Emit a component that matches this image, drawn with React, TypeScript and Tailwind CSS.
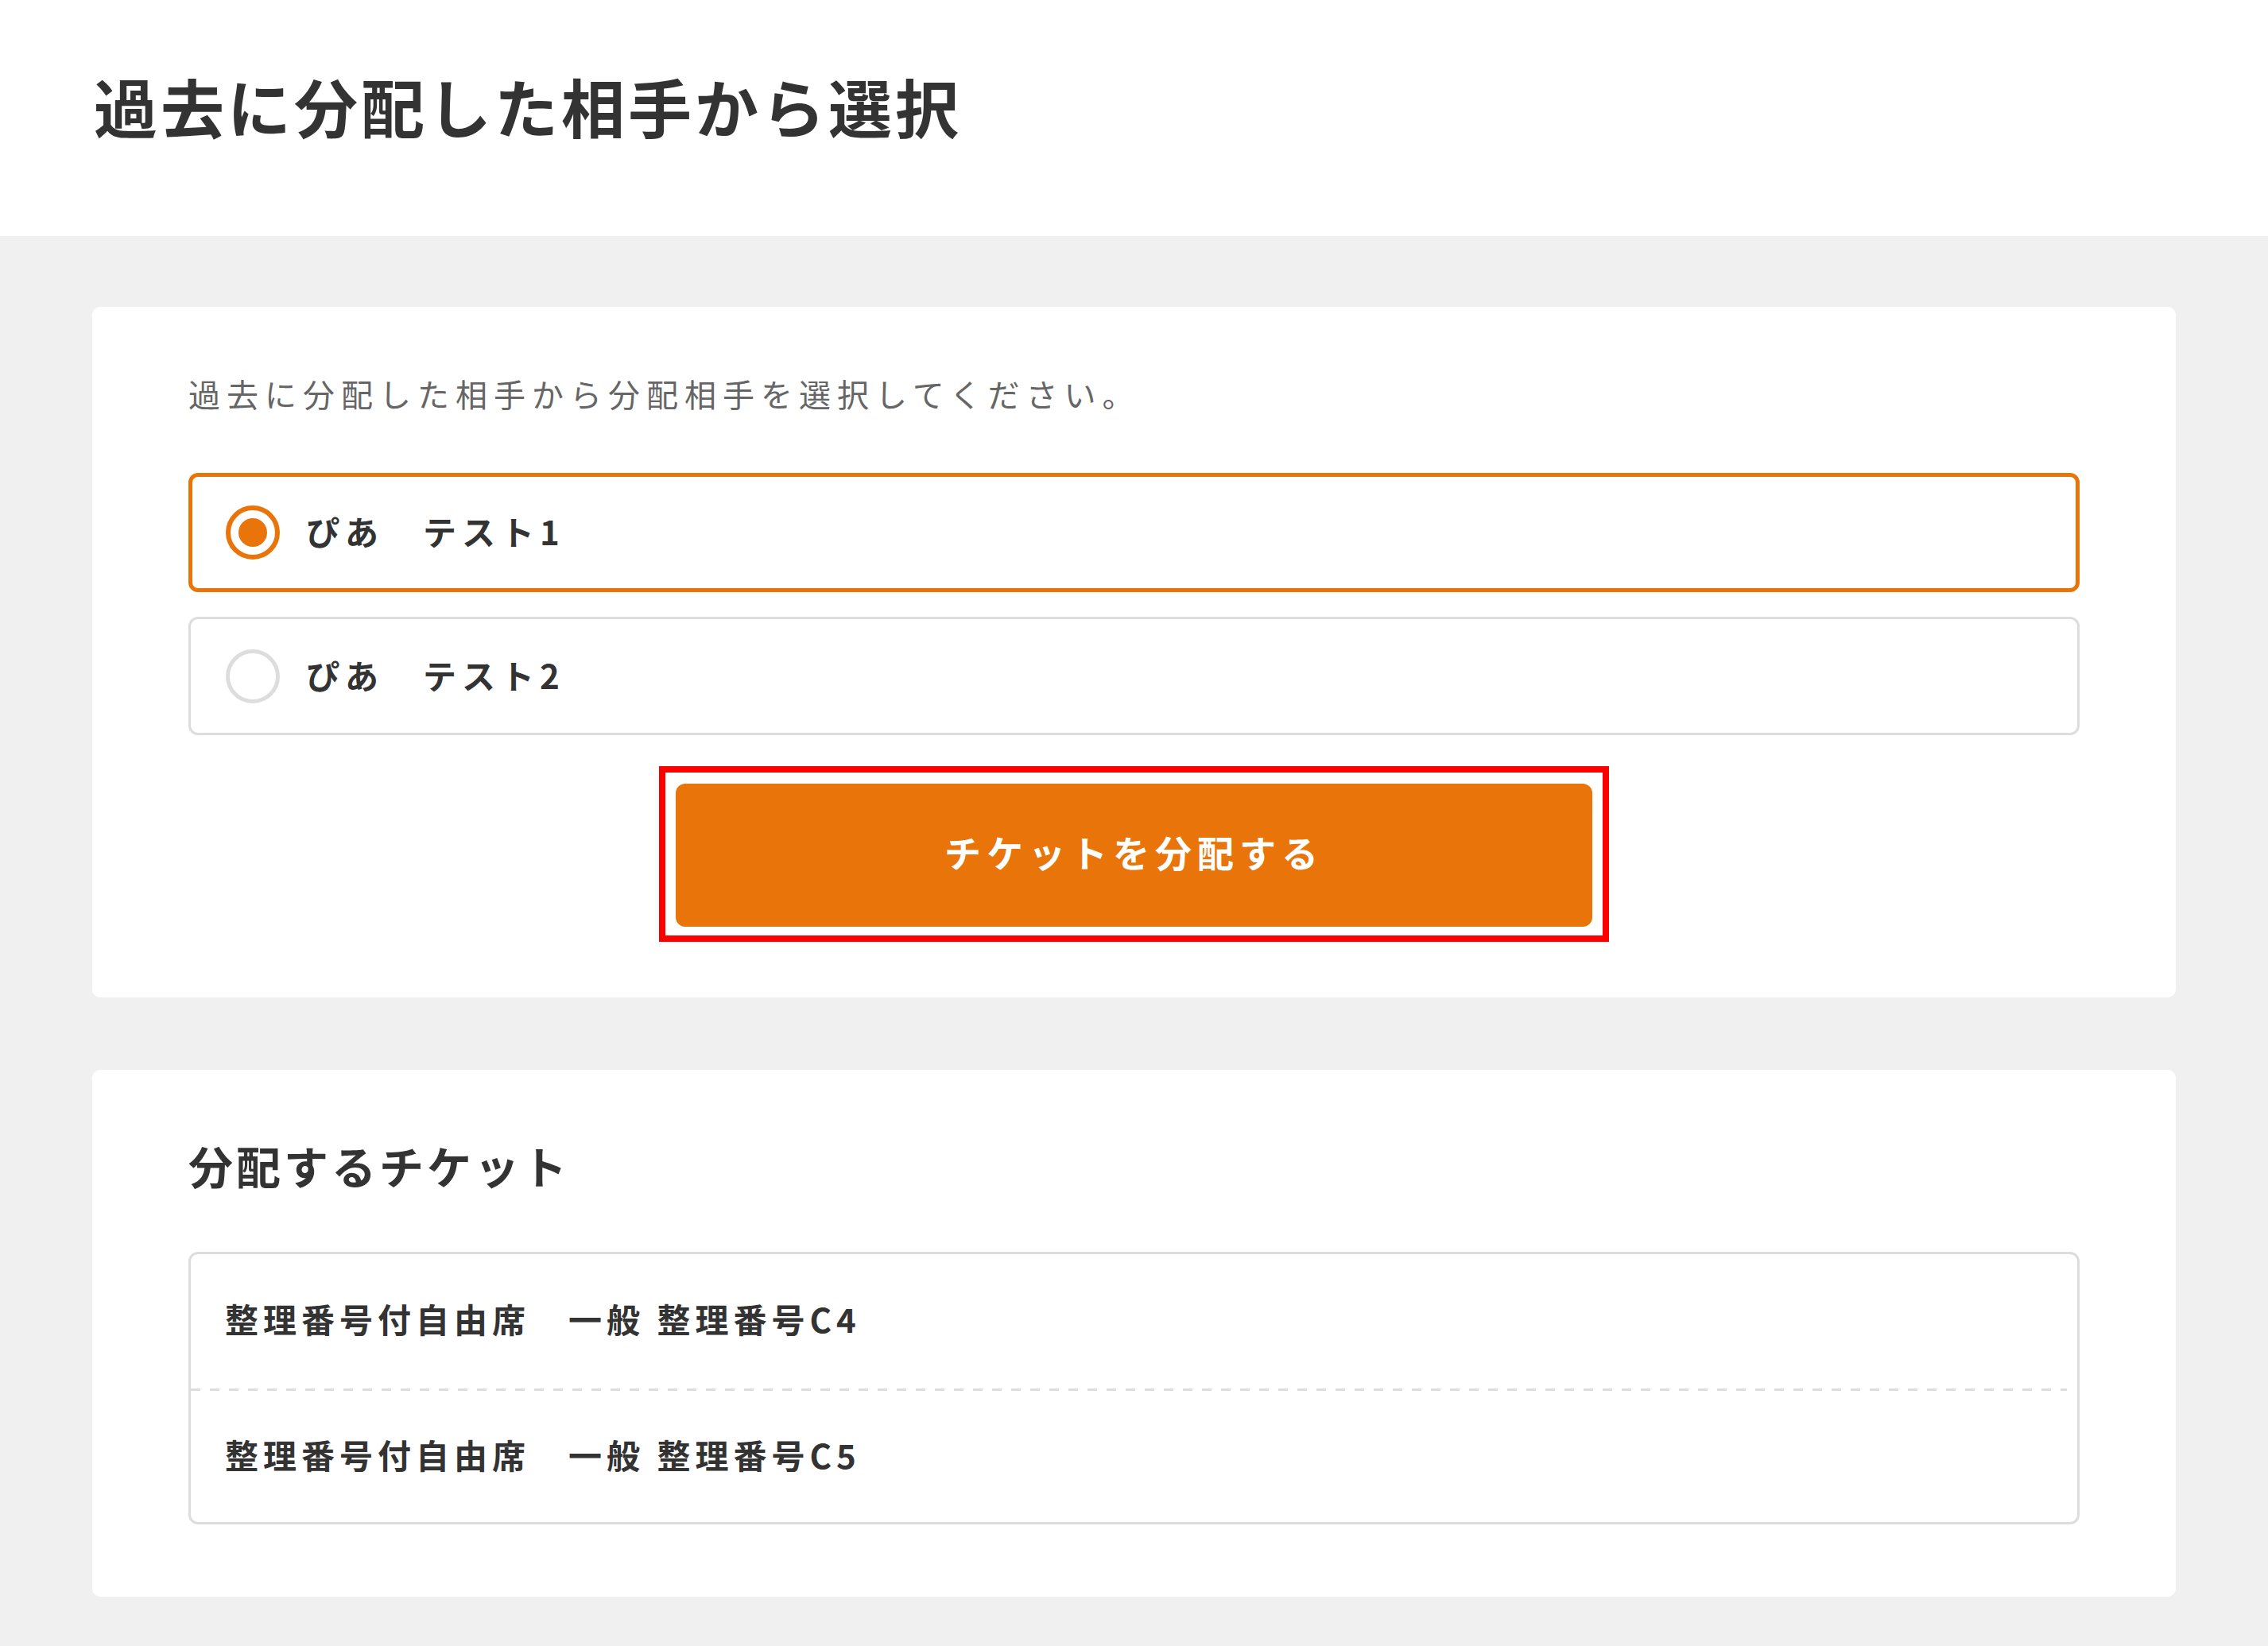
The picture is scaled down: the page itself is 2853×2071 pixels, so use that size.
import { useState } from "react";

const RECIPIENTS = [
  { id: "1", label: "ぴあ　テスト1" },
  { id: "2", label: "ぴあ　テスト2" },
];

const TICKETS = ["整理番号付自由席　一般 整理番号C4", "整理番号付自由席　一般 整理番号C5"];

export default function App() {
  const [selected, setSelected] = useState("1");

  return (
    <div className="min-h-screen bg-[#f0f0f0] pb-[64px] font-['Noto_Sans_CJK_JP','Noto_Sans',sans-serif] text-[#333]">
      <header className="h-[297px] bg-white pl-[118px] pt-[92px]">
        <h1 className="text-[80px] leading-none font-bold tracking-[4px]">
          過去に分配した相手から選択
        </h1>
      </header>

      <div className="mx-[116px] mt-[89px] flex flex-col gap-[91px]">
        <section className="rounded-[10px] bg-white px-[121px] pt-[89px] pb-[70px]">
          <p className="text-[40px] leading-none tracking-[8px] text-[#666]">
            過去に分配した相手から分配相手を選択してください。
          </p>

          <div className="mt-[80px] flex flex-col gap-[31px]">
            {RECIPIENTS.map((r) => {
              const active = selected === r.id;
              return (
                <label
                  key={r.id}
                  onClick={() => setSelected(r.id)}
                  className={
                    active
                      ? "flex h-[150px] cursor-pointer items-center gap-[33px] rounded-[12px] border-[5px] border-[#e8740a] pl-[42px]"
                      : "flex h-[149px] cursor-pointer items-center gap-[33px] rounded-[12px] border-[3px] border-[#dddddd] pl-[44px]"
                  }
                >
                  {active ? (
                    <span className="flex h-[68px] w-[68px] items-center justify-center rounded-full border-[6px] border-[#e8740a]">
                      <span className="h-[36px] w-[36px] rounded-full bg-[#e8740a]" />
                    </span>
                  ) : (
                    <span className="h-[68px] w-[68px] rounded-full border-[5px] border-[#dddddd]" />
                  )}
                  <span className="pb-[4px] text-[42px] leading-none font-bold tracking-[7px]">
                    {r.label}
                  </span>
                </label>
              );
            })}
          </div>

          <div className="mx-auto mt-[39px] w-[1195px] border-[8px] border-[#ff0000] px-[13px] pt-[14px] pb-[11px]">
            <button className="flex h-[180px] w-full items-center justify-center rounded-[12px] bg-[#e8740a] pb-[10px] text-[46px] font-bold tracking-[7px] text-white">
              チケットを分配する
            </button>
          </div>
        </section>

        <section className="rounded-[10px] bg-white px-[121px] pt-[92px] pb-[91px]">
          <h2 className="text-[56px] leading-none font-bold tracking-[4px]">
            分配するチケット
          </h2>
          <div className="mt-[81px] rounded-[12px] border-[3px] border-[#dddddd]">
            {TICKETS.map((t, i) => (
              <div key={t}>
                {i > 0 && (
                  <div className="mr-[13px] h-[3px] bg-[repeating-linear-gradient(90deg,#dddddd_0_12px,transparent_12px_24px)]" />
                )}
                <div
                  className={
                    i === 0
                      ? "flex h-[169px] items-center pb-[8px] pl-[43px] text-[42px] font-bold tracking-[6px]"
                      : "flex h-[165px] items-center pb-[6px] pl-[43px] text-[42px] font-bold tracking-[6px]"
                  }
                >
                  {t}
                </div>
              </div>
            ))}
          </div>
        </section>
      </div>
    </div>
  );
}
